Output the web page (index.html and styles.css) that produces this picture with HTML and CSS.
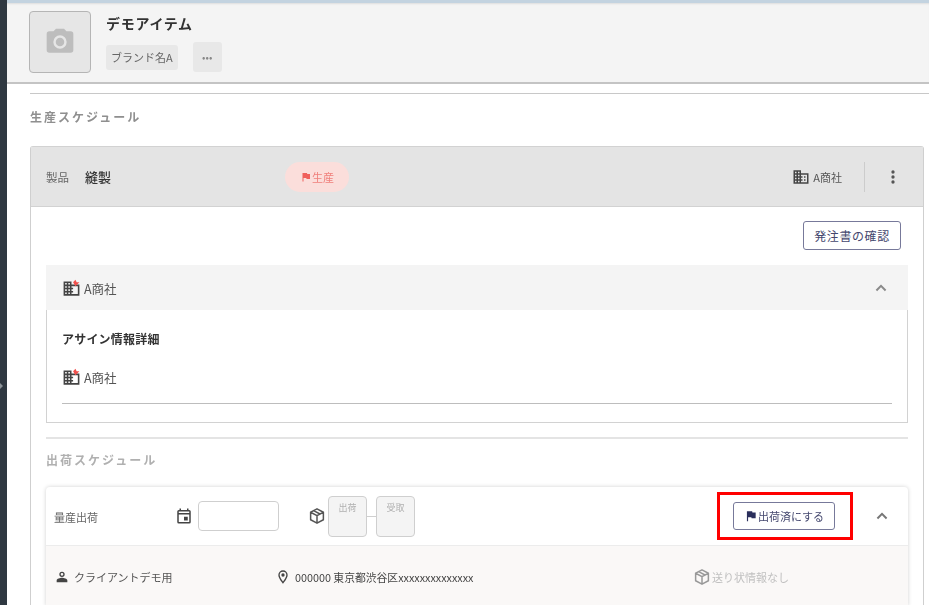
FILE: index.html
```html
<!DOCTYPE html>
<html lang="ja">
<head>
<meta charset="utf-8">
<title>生産スケジュール</title>
<link rel="stylesheet" href="styles.css">
</head>
<body>
<aside class="rail"><span class="rail-arrow"></span></aside>
<div class="main">
  <div class="topbar"></div>
  <header class="item-head">
    <div class="thumb">
      <svg width="32" height="32" viewBox="0 0 24 24"><circle cx="12" cy="12" r="3.2" fill="#bdbdbd"/><path fill="#bdbdbd" d="M9 2 7.17 4H4a2 2 0 0 0-2 2v12a2 2 0 0 0 2 2h16a2 2 0 0 0 2-2V6a2 2 0 0 0-2-2h-3.17L15 2H9zm3 15a5 5 0 1 1 0-10 5 5 0 0 1 0 10z"/></svg>
    </div>
    <div class="item-info">
      <h1 class="item-name">デモアイテム</h1>
      <div class="item-tags">
        <span class="tag">ブランド名A</span>
        <span class="more">•••</span>
      </div>
    </div>
  </header>
  <main class="content">
    <hr class="rule">
    <h2 class="section-title">生産スケジュール</h2>
    <section class="card">
      <div class="card-head">
        <span class="label">製品</span>
        <span class="card-name">縫製</span>
        <span class="pill">
          <svg width="12" height="12" viewBox="0 0 24 24"><path fill="#f0605c" d="M14.4 6 14 4H5v17h2v-7h5.6l.4 2h7V6z"/></svg>生産
        </span>
        <span class="company">
          <svg width="18" height="18" viewBox="0 0 24 24"><path fill="#444" d="M12 7V3H2v18h20V7H12zM6 19H4v-2h2v2zm0-4H4v-2h2v2zm0-4H4V9h2v2zm0-4H4V5h2v2zm4 12H8v-2h2v2zm0-4H8v-2h2v2zm0-4H8V9h2v2zm0-4H8V5h2v2zm10 12h-8v-2h2v-2h-2v-2h2v-2h-2V9h8v10zm-2-8h-2v2h2v-2zm0 4h-2v2h2v-2z"/></svg>
          A商社
        </span>
        <span class="vbar"></span>
        <svg class="kebab" width="20" height="20" viewBox="0 0 24 24"><path fill="#555" d="M12 8a2 2 0 1 0 0-4 2 2 0 0 0 0 4zm0 2a2 2 0 1 0 0 4 2 2 0 0 0 0-4zm0 6a2 2 0 1 0 0 4 2 2 0 0 0 0-4z"/></svg>
      </div>
      <div class="card-body">
        <div class="actions"><button class="btn btn-order">発注書の確認</button></div>
        <section class="assign">
          <div class="assign-head">
            <span class="company-line">
              <svg width="19" height="19" viewBox="0 0 24 24"><path fill="#444" d="M12 7V3H2v18h20V7H12zM6 19H4v-2h2v2zm0-4H4v-2h2v2zm0-4H4V9h2v2zm0-4H4V5h2v2zm4 12H8v-2h2v2zm0-4H8v-2h2v2zm0-4H8V9h2v2zm0-4H8V5h2v2zm10 12h-8v-2h2v-2h-2v-2h2v-2h-2V9h8v10z"/><path fill="#f0504c" d="m17 1 1.500 3H22l-5 5-3-5z"/></svg>
              A商社
            </span>
            <svg class="chev" width="20" height="20" viewBox="0 0 24 24"><path fill="none" stroke="#8a8a8a" stroke-width="2.400" d="m6.500 15 5.500-5.500 5.500 5.500"/></svg>
          </div>
          <div class="assign-body">
            <h3 class="assign-title">アサイン情報詳細</h3>
            <div class="assign-row">
              <span class="company-line">
                <svg width="19" height="19" viewBox="0 0 24 24"><path fill="#444" d="M12 7V3H2v18h20V7H12zM6 19H4v-2h2v2zm0-4H4v-2h2v2zm0-4H4V9h2v2zm0-4H4V5h2v2zm4 12H8v-2h2v2zm0-4H8v-2h2v2zm0-4H8V9h2v2zm0-4H8V5h2v2zm10 12h-8v-2h2v-2h-2v-2h2v-2h-2V9h8v10z"/><path fill="#f0504c" d="m17 1 1.500 3H22l-5 5-3-5z"/></svg>
                A商社
              </span>
            </div>
          </div>
        </section>
        <hr class="rule rule-inner">
        <h2 class="section-title sub">出荷スケジュール</h2>
        <section class="ship">
          <div class="ship-row">
            <span class="ship-name">量産出荷</span>
            <svg class="cal" width="18" height="18" viewBox="0 0 24 24"><path fill="#444" d="M19 4h-1V2h-2v2H8V2H6v2H5a2 2 0 0 0-2 2v14a2 2 0 0 0 2 2h14a2 2 0 0 0 2-2V6a2 2 0 0 0-2-2zm0 16H5V10h14v10zm0-12H5V6h14v2zm-7 5h5v5h-5z"/></svg>
            <span class="date-input"></span>
            <svg class="box" width="18" height="18" viewBox="0 0 24 24"><path fill="none" stroke="#555" stroke-width="2" stroke-linejoin="round" d="M12 2.500 3.500 7v10l8.500 4.500 8.500-4.500V7zM3.500 7l8.500 4.500L20.500 7M12 11.500v10M7.500 4.800l8.500 4.500"/></svg>
            <div class="steps">
              <span class="step">出荷</span>
              <span class="step-link"></span>
              <span class="step">受取</span>
            </div>
            <button class="btn btn-ship">
              <svg width="14" height="14" viewBox="0 0 24 24"><path fill="#2b2f5c" d="M14.400 6 14 4H5v17h2v-7h5.600l.4 2h7V6z"/></svg>出荷済にする
            </button>
            <svg class="chev ship-chev" width="20" height="20" viewBox="0 0 24 24"><path fill="none" stroke="#777" stroke-width="2.400" d="m6.500 15 5.500-5.500 5.500 5.500"/></svg>
          </div>
          <div class="ship-detail">
            <span class="client">
              <svg width="16" height="16" viewBox="0 0 24 24"><path fill="#444" d="M12 4a4 4 0 1 0 0 8 4 4 0 0 0 0-8zm0 6a2 2 0 1 1 0-4 2 2 0 0 1 0 4zm0 3c-2.700 0-8 1.340-8 4v3h16v-3c0-2.660-5.300-4-8-4z"/></svg>
              クライアントデモ用
            </span>
            <span class="address">
              <svg width="16" height="16" viewBox="0 0 24 24"><path fill="#444" fill-rule="evenodd" d="M12 2a7 7 0 0 0-7 7c0 5.250 7 13 7 13s7-7.750 7-13a7 7 0 0 0-7-7zM7 9a5 5 0 0 1 10 0c0 2.880-2.880 7.190-5 9.880C9.920 16.210 7 11.850 7 9z"/><circle fill="#444" cx="12" cy="9" r="2.500"/></svg>
              000000 東京都渋谷区xxxxxxxxxxxxxx
            </span>
            <span class="invoice">
              <svg width="18" height="18" viewBox="0 0 24 24"><path fill="none" stroke="#999" stroke-width="2" stroke-linejoin="round" d="M12 2.500 3.500 7v10l8.500 4.500 8.500-4.500V7zM3.500 7l8.500 4.500L20.500 7M12 11.500v10M7.500 4.800l8.500 4.500"/></svg>
              送り状情報なし
            </span>
          </div>
        </section>
      </div>
    </section>
  </main>
</div>
<div class="highlight"></div>
</body>
</html>
```
FILE: styles.css
```css
* { box-sizing: border-box; }
html, body { margin: 0; height: 100%; }
body {
  width: 929px;
  height: 605px;
  overflow: hidden;
  display: flex;
  position: relative;
  background: #fff;
  color: #333;
  font-family: "Noto Sans CJK JP", "Noto Sans", sans-serif;
  font-size: 11px;
  filter: blur(.35px);
}
svg { display: block; flex: none; }
.rail { width: 7px; background: #2f3841; flex: none; position: relative; }
.rail-arrow {
  position: absolute; left: 0; top: 383px;
  border-left: 3px solid #8b9298;
  border-top: 3px solid transparent;
  border-bottom: 3px solid transparent;
}
.main { flex: 1; min-width: 0; display: flex; flex-direction: column; }
.topbar { height: 3px; background: #c3d3e0; flex: none; }
.item-head {
  height: 81px; flex: none;
  background: #f4f4f4;
  border-bottom: 2px solid #c4c4c4;
  box-shadow: inset 0 2px 2px -1px #ddd;
  padding: 8px 22px;
  display: flex;
  gap: 15px;
}
.thumb {
  width: 62px; height: 62px;
  background: #e6e6e6;
  border: 1px solid #b5b5b5;
  border-radius: 4px;
  display: flex; align-items: center; justify-content: center;
}
.item-info { display: flex; flex-direction: column; }
.item-name { margin: 2px 0 9px; font-size: 14px; line-height: 20px; font-weight: 700; color: #333; letter-spacing: .7px; }
.item-tags { display: flex; gap: 15px; align-items: center; }
.tag {
  height: 25px; line-height: 25px; padding: 0 5px;
  background: #e8e8e8; border-radius: 3px;
  font-size: 11px; color: #666;
}
.more {
  width: 29px; height: 30px; line-height: 30px; text-align: center;
  background: #e8e8e8; border-radius: 3px;
  font-size: 10px; color: #888; letter-spacing: 0;
}
.content { padding: 9px 5px 0 23px; flex: 1; min-height: 0; }
.rule { margin: 0; border: 0; border-top: 1px solid #c8c8c8; margin-right: -5px; }
.section-title {
  margin: 14px 0 20px; font-size: 12px; line-height: 18px; font-weight: 700;
  color: #8f8f8f; letter-spacing: 2px;
}
.card { border: 1px solid #cfcfcf; border-top-color: #d2d2d2; border-radius: 3px 3px 0 0; }
.card-head {
  height: 60px; background: #e4e4e4; border-bottom: 1px solid #d2d2d2;
  display: flex; align-items: center; padding: 0 15px;
}
.label { font-size: 11.500px; color: #666; width: 39px; }
.card-name { font-size: 13px; font-weight: 500; color: #333; width: 200px; }
.pill {
  width: 64px; height: 30px; border-radius: 15px;
  background: #fbdedb; color: #f0807c;
  display: flex; align-items: center; justify-content: center;
  font-size: 11px;
}
.company {
  margin-left: auto; display: flex; align-items: center; gap: 3px;
  font-size: 11px; color: #555;
}
.vbar { width: 1px; height: 30px; background: #ccc; margin: 0 18px 0 22px; }
.kebab { margin-right: 5px; }
.card-body { padding: 14px 15px 0; }
.actions { display: flex; justify-content: flex-end; padding-right: 7px; }
.btn {
  font-family: inherit; background: #fff; cursor: pointer;
  border: 1px solid #77799a; border-radius: 3px; color: #44476e;
  display: flex; align-items: center; justify-content: center;
}
.btn-order { width: 98px; height: 29px; font-size: 12px; letter-spacing: .6px; padding: 0; }
.assign { margin-top: 15px; border: 1px solid #d2d2d2; border-top: 0; height: 158px; }
.assign-head {
  height: 45px; background: #f4f4f4; margin: 0 -1px;
  display: flex; align-items: center; justify-content: space-between;
  padding: 1px 17px 0 16px;
}
.company-line { display: flex; align-items: center; gap: 3px; font-size: 12.500px; color: #555; }
.assign-body { padding: 19px 15px 0; }
.assign-title { margin: 0; font-size: 12px; line-height: 20px; font-weight: 700; color: #333; letter-spacing: .2px; }
.assign-row { margin-top: 19px; height: 36px; border-bottom: 1px solid #bdbdbd; }
.rule-inner { margin: 14px 0 0; border-top: 2px solid #e4e4e4; }
.section-title.sub { margin: 12px 0 18px; color: #b0b0b0; }
.ship {
  border-radius: 4px 4px 0 0;
  box-shadow: 0 0 4px rgba(0,0,0,.18);
}
.ship-row {
  height: 59px; display: flex; align-items: center; padding: 0 16px 0 8px;
  border-bottom: 1px solid #ececec;
}
.ship-name { width: 121px; font-size: 11px; color: #666; padding-top: 1px; }
.date-input { width: 81px; height: 30px; margin-left: 5px; border: 1px solid #cfcfcf; border-radius: 4px; background: #fff; }
.box { margin-left: 29px; }
.steps { display: flex; align-items: center; margin-left: 2px; }
.step {
  width: 39px; height: 41px; background: #f4f4f4;
  border: 1px solid #cfcfcf; border-radius: 4px;
  font-size: 9px; color: #b0b0b0; text-align: center; padding-top: 5px; line-height: 12px;
}
.step-link { width: 9px; height: 1px; background: #cfcfcf; }
.btn-ship { margin-left: auto; margin-right: 37px; width: 102px; height: 28px; font-size: 11px; gap: 0; padding: 0; }
.ship-chev { margin-right: 0; }
.ship-detail {
  height: 60px; background: #faf8f7; display: flex; align-items: center;
  font-size: 11px; color: #555; padding: 2px 0 0 8px;
}
.client { display: flex; align-items: center; gap: 4px; width: 221px; }
.address { display: flex; align-items: center; gap: 4px; width: 418px; color: #444; font-size: 10.800px; }
.invoice { display: flex; align-items: center; gap: 1px; color: #c0c0c0; font-size: 11px; }
.highlight {
  position: absolute; left: 717px; top: 492px; width: 136px; height: 48px;
  border: 3px solid #f00;
}
```
